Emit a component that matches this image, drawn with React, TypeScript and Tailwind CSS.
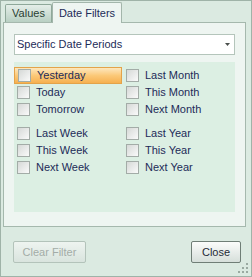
const LEFT = ['Yesterday', 'Today', 'Tomorrow', null, 'Last Week', 'This Week', 'Next Week'];
const RIGHT = ['Last Month', 'This Month', 'Next Month', null, 'Last Year', 'This Year', 'Next Year'];

function Row({ label, active }: { label: string; active?: boolean }) {
  return (
    <div
      className={`flex items-center h-[17px] pl-[3px] ${
        active ? 'border border-[#e3a34a] bg-gradient-to-b from-[#fde7bd] via-[#fbc978] to-[#f6b04f] pl-[2px] mr-px' : ''
      }`}
    >
      <span className="w-[13px] h-[13px] border border-[#a3aca7] bg-gradient-to-br from-[#d6d9d7] to-[#fafafa] shrink-0" />
      <span className="ml-[6px] text-[#1d2b58] leading-none">{label}</span>
    </div>
  );
}

function Column({ items, first }: { items: (string | null)[]; first?: boolean }) {
  return (
    <div className="flex flex-col">
      {items.map((it, i) =>
        it === null ? <div key={i} className="h-[7px]" /> : <Row key={i} label={it} active={first && i === 0} />
      )}
    </div>
  );
}

export default function App() {
  return (
    <div className="w-[252px] h-[277px] relative flex flex-col border border-[#9fb3a8] bg-[#dbeae1] font-['Liberation_Sans',Arial,sans-serif] text-[11px]">
      <div className="flex items-end h-[21px] pl-[4px]">
        <div className="w-[47px] h-[18px] border border-b-0 border-[#8ea899] rounded-t-[2px] bg-gradient-to-b from-[#e4eee8] to-[#b9d0c3] flex items-center justify-center text-[#2a3f33]">
          Values
        </div>
        <div className="relative z-10 -mb-px w-[70px] h-[21px] border border-b-0 border-[#a3b6ab] rounded-t-[2px] bg-[#eef5f1] flex items-center justify-center text-[#1d2b58]">
          Date Filters
        </div>
      </div>

      <div className="ml-[2px] mr-[5px] h-[205px] border border-[#a5b8ad] bg-[#eef5f1] px-[10px] pt-[11px]">
        <div className="h-[21px] bg-white border border-[#b4c5bb] flex items-center justify-between pl-[2px] pr-[4px] text-[#1d2b58]">
          <span>Specific Date Periods</span>
          <svg width="5" height="3" viewBox="0 0 5 3">
            <path d="M0 0 H5 L2.5 3 Z" fill="#4a4f4c" />
          </svg>
        </div>
        <div className="mt-[7px] h-[150px] bg-[#dcefe3] pt-[5px] grid grid-cols-[109px_1fr]">
          <Column items={LEFT} first />
          <Column items={RIGHT} />
        </div>
      </div>

      <div className="flex justify-between pl-[12px] pr-[10px] mt-[14px]">
        <button className="w-[73px] h-[22px] border border-[#b3c3ba] rounded-[2px] bg-gradient-to-b from-[#eef4f0] to-[#d9e4de] text-[#a3aca7]">
          Clear Filter
        </button>
        <button className="w-[50px] h-[22px] border border-[#6f7e76] rounded-[2px] bg-gradient-to-b from-[#fbfcfb] to-[#d6dfda] text-[#1e2a36]">
          Close
        </button>
      </div>

      <svg className="absolute right-[2px] bottom-[2px]" width="12" height="12" viewBox="0 0 12 12">
        <rect x="9" y="1" width="2" height="2" fill="#9aaaa1" />
        <rect x="5" y="5" width="2" height="2" fill="#9aaaa1" />
        <rect x="9" y="5" width="2" height="2" fill="#9aaaa1" />
        <rect x="1" y="9" width="2" height="2" fill="#9aaaa1" />
        <rect x="5" y="9" width="2" height="2" fill="#9aaaa1" />
        <rect x="9" y="9" width="2" height="2" fill="#9aaaa1" />
      </svg>
    </div>
  );
}
